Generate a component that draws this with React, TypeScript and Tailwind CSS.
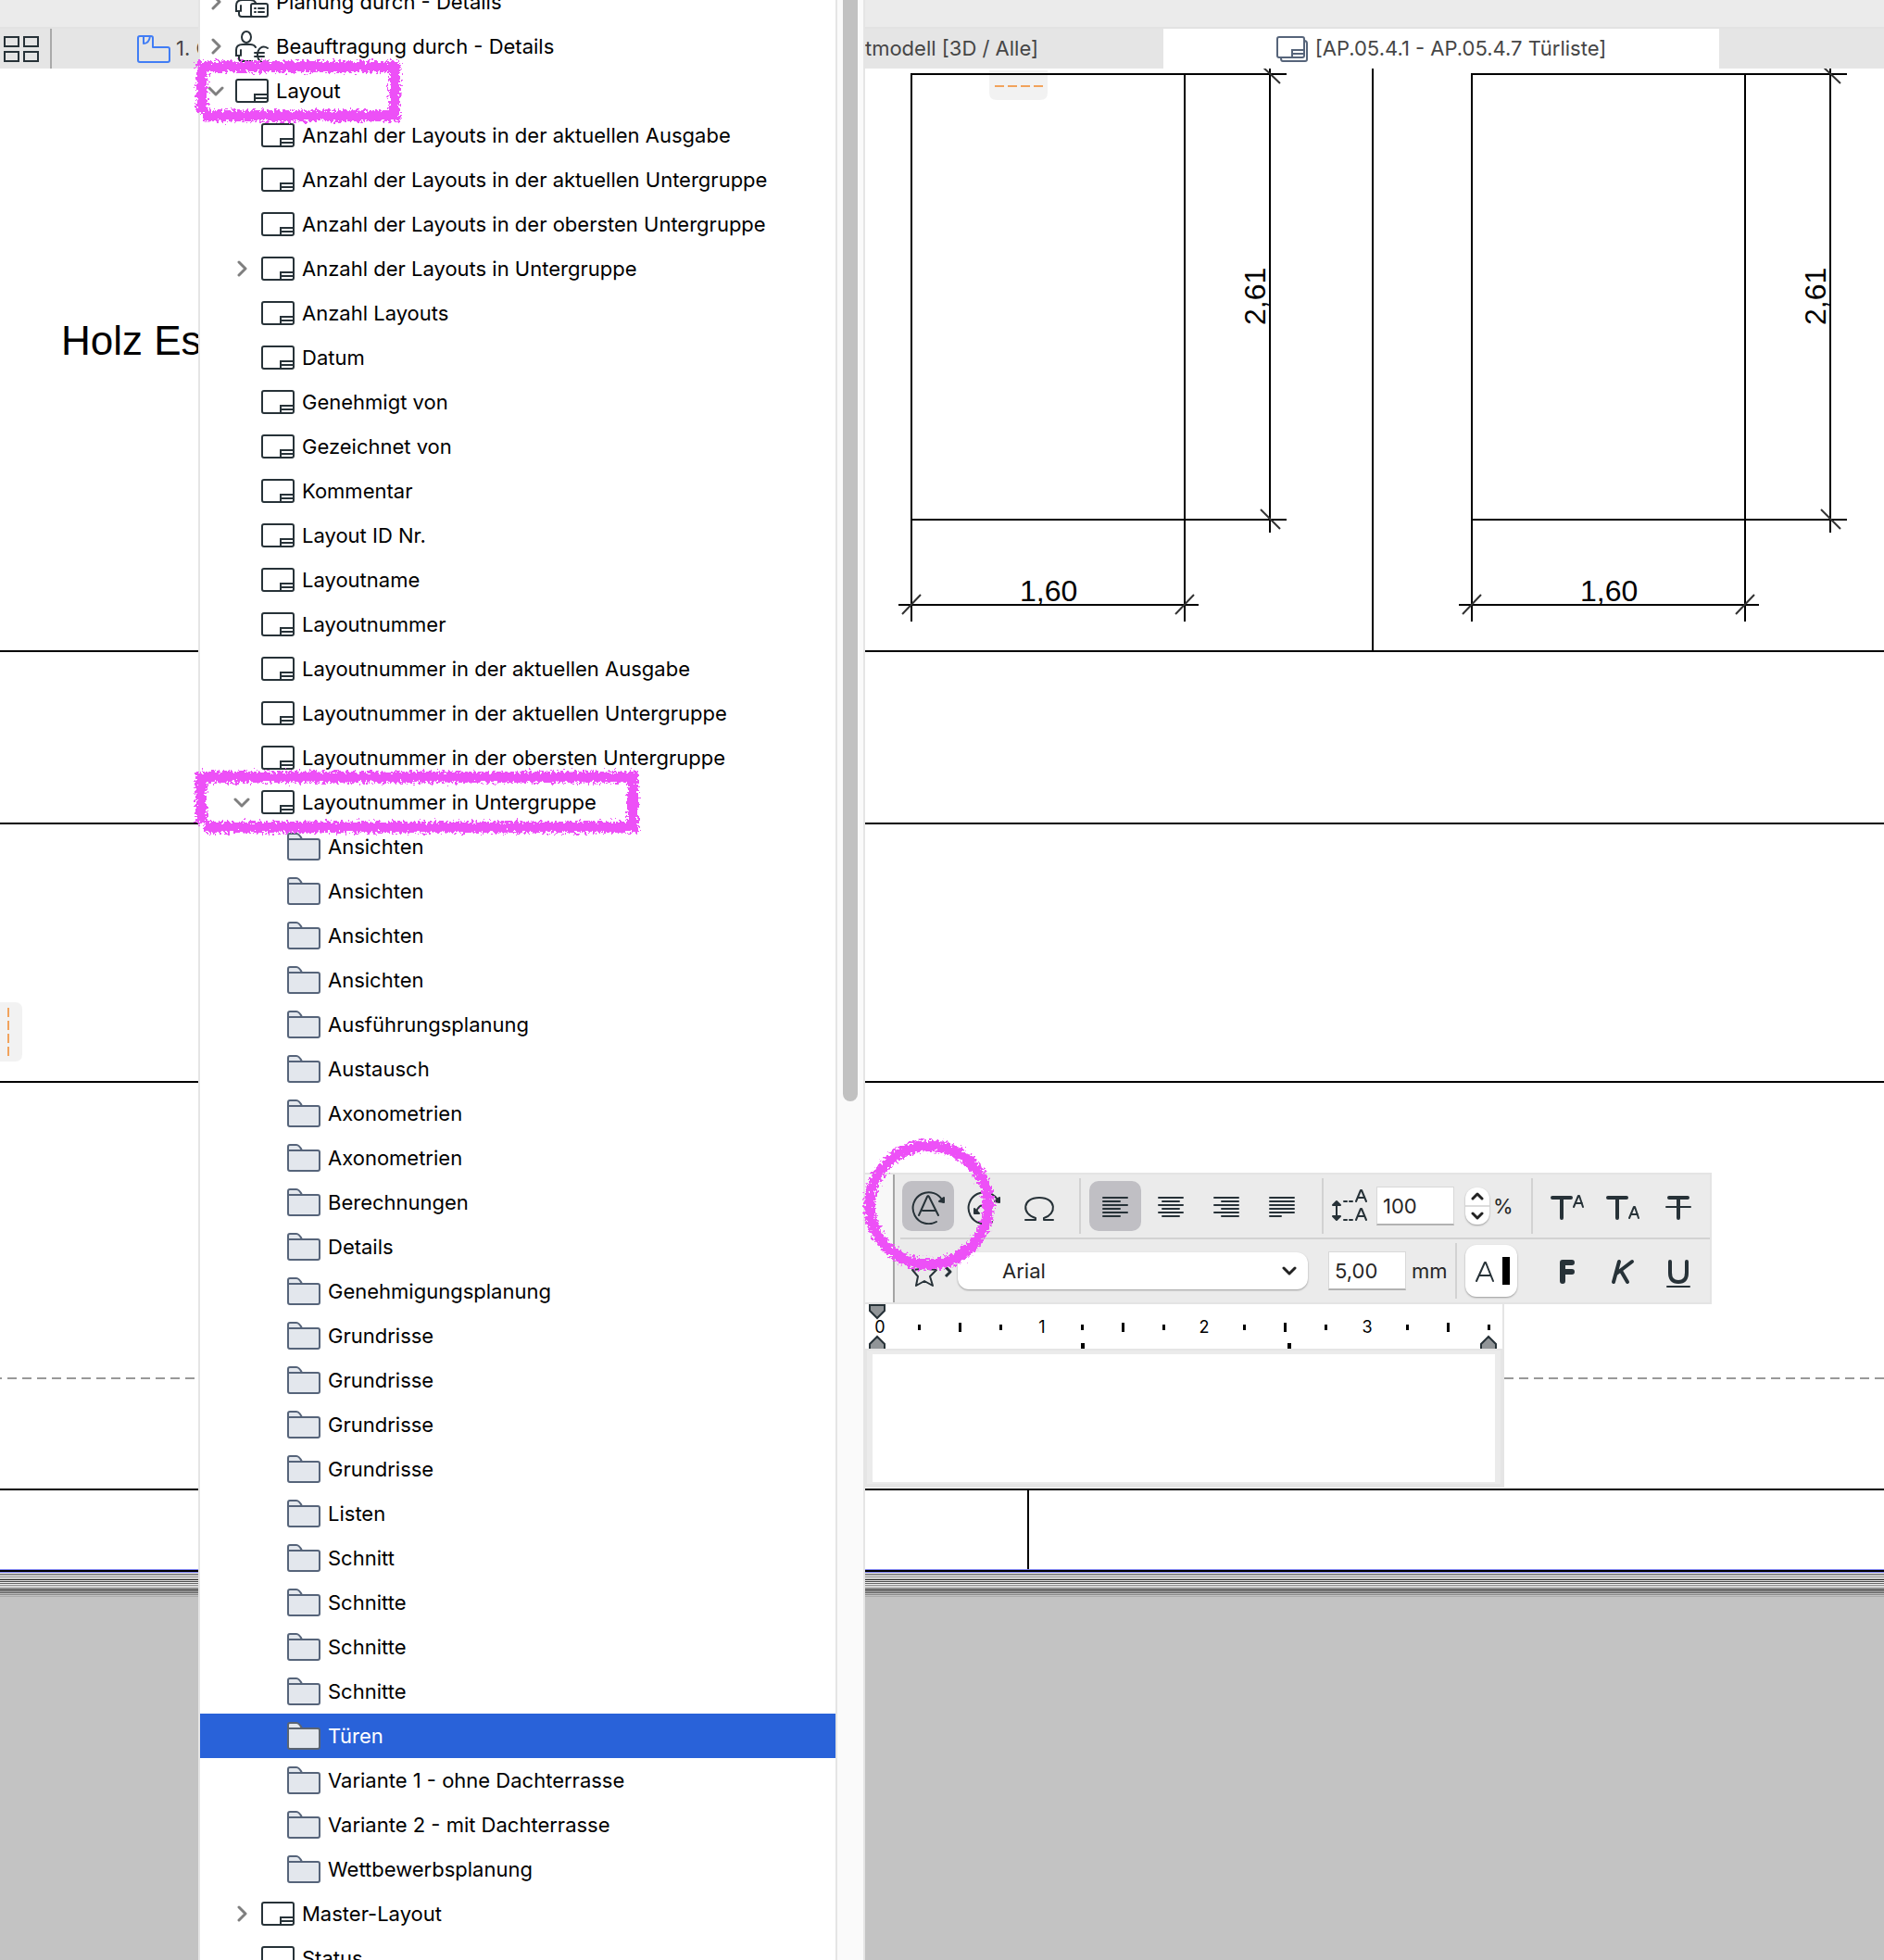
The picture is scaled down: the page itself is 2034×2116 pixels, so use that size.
import { type ReactNode } from "react";
import clsx from "clsx";

type IconKind = "planner" | "contractor" | "layout" | "folder";

interface TreeItem {
  label: string;
  level: 0 | 1 | 2;
  icon: IconKind;
  state?: "open" | "closed";
  selected?: boolean;
}

const layoutFields = [
  "Anzahl der Layouts in der aktuellen Ausgabe",
  "Anzahl der Layouts in der aktuellen Untergruppe",
  "Anzahl der Layouts in der obersten Untergruppe",
  "Anzahl der Layouts in Untergruppe",
  "Anzahl Layouts",
  "Datum",
  "Genehmigt von",
  "Gezeichnet von",
  "Kommentar",
  "Layout ID Nr.",
  "Layoutname",
  "Layoutnummer",
  "Layoutnummer in der aktuellen Ausgabe",
  "Layoutnummer in der aktuellen Untergruppe",
  "Layoutnummer in der obersten Untergruppe",
];

const subsets = [
  "Ansichten",
  "Ansichten",
  "Ansichten",
  "Ansichten",
  "Ausführungsplanung",
  "Austausch",
  "Axonometrien",
  "Axonometrien",
  "Berechnungen",
  "Details",
  "Genehmigungsplanung",
  "Grundrisse",
  "Grundrisse",
  "Grundrisse",
  "Grundrisse",
  "Listen",
  "Schnitt",
  "Schnitte",
  "Schnitte",
  "Schnitte",
  "Türen",
  "Variante 1 - ohne Dachterrasse",
  "Variante 2 - mit Dachterrasse",
  "Wettbewerbsplanung",
];

const items: TreeItem[] = [
  { label: "Planung durch - Details", level: 0, icon: "planner", state: "closed" },
  { label: "Beauftragung durch - Details", level: 0, icon: "contractor", state: "closed" },
  { label: "Layout", level: 0, icon: "layout", state: "open" },
  ...layoutFields.map((label): TreeItem => ({
    label,
    level: 1,
    icon: "layout",
    state: label === "Anzahl der Layouts in Untergruppe" ? "closed" : undefined,
  })),
  { label: "Layoutnummer in Untergruppe", level: 1, icon: "layout", state: "open" },
  ...subsets.map((label): TreeItem => ({
    label,
    level: 2,
    icon: "folder",
    selected: label === "Türen",
  })),
  { label: "Master-Layout", level: 1, icon: "layout", state: "closed" },
  { label: "Status", level: 1, icon: "layout" },
];

function Chevron({ open }: { open: boolean }) {
  return (
    <svg width="18" height="18" fill="none" stroke="#7f7f7f" strokeWidth="3" strokeLinecap="round" strokeLinejoin="round">
      {open ? <path d="M2 6l7 7 7-7" /> : <path d="M6 2l7 7-7 7" />}
    </svg>
  );
}

function Person() {
  return (
    <>
      <ellipse cx="12" cy="8" rx="5" ry="6" />
      <path d="M9 34H7c-2 0-3-1-3-3v-3H1v-6c0-4 3-6 7-6h8c3 0 5 1 6 3" />
      <path d="M6 22v6M9 34h9" />
    </>
  );
}

function ItemIcon({ kind, selected }: { kind: IconKind; selected?: boolean }) {
  if (kind === "folder") {
    const stroke = selected ? "#5a6472" : "#56647a";
    return (
      <svg width="36" height="30" fill="#e3e7ed" stroke={stroke} strokeWidth="2" strokeLinejoin="round">
        <path d="M1 8V3q0-2 2-2h7q3 0 6 6H1z" />
        <path d="M1 7h32q2 0 2 2v18q0 2-2 2H3q-2 0-2-2z" />
      </svg>
    );
  }
  if (kind === "layout") {
    return (
      <svg width="36" height="28" fill="none" stroke="#273238" strokeWidth="2">
        <rect x="1" y="2" width="34" height="24" rx="2" />
        <path d="M21 26v-8h14M21 22h14" />
      </svg>
    );
  }
  return (
    <svg width="36" height="36" fill="none" stroke="#273238" strokeWidth="2" strokeLinecap="round">
      <Person />
      {kind === "planner" ? (
        <>
          <rect x="17" y="20" width="18" height="14" rx="2" fill="#fff" />
          <path d="M21 25h1M25 25h6M21 29h1M25 29h6" />
        </>
      ) : (
        <>
          <circle cx="31" cy="27" r="8" fill="#fff" stroke="none" />
          <path d="M35 20c-6-4-11 1-11 7s5 11 11 7M21 25h10M21 29h10" />
        </>
      )}
    </svg>
  );
}

const indent = ["pl-0.5", "pl-[30px]", "pl-[58px]"];

function TreeRow({ item }: { item: TreeItem }) {
  return (
    <li>
      <button
        className={clsx(
          "flex h-12 w-full items-center whitespace-nowrap text-left",
          indent[item.level],
          item.selected ? "bg-[#2962d9] text-white" : "text-black"
        )}
      >
        <span className="flex w-[30px] shrink-0 justify-center">
          {item.state && <Chevron open={item.state === "open"} />}
        </span>
        <span className="ml-1.5 shrink-0">
          <ItemIcon kind={item.icon} selected={item.selected} />
        </span>
        <span className="ml-2">{item.label}</span>
      </button>
    </li>
  );
}

function FieldMenu() {
  return (
    <div className="absolute top-0 left-[214px] flex h-full w-[720px] overflow-hidden border-l-2 border-[#e5e5e5] bg-white">
      <ul className="-mt-[22px] flex-1">
        {items.map((item, i) => (
          <TreeRow key={i} item={item} />
        ))}
      </ul>
      <div className="w-8 border-x-2 border-[#e5e5e5] bg-[#fafafa] px-1.5">
        <div className="h-[1189px] w-4 rounded-b-full bg-[#c1c1c1]" />
      </div>
    </div>
  );
}

function TabBar() {
  return (
    <header className="text-[#464646]">
      <div className="h-[31px] border-b-2 border-[#e2e2e2] bg-[#ebebeb]" />
      <nav className="flex h-[43px] bg-[#e5e5e5]">
        <button aria-label="Übersicht" className="flex w-14 items-center border-r-2 border-[#a9a9a9] pl-1">
          <svg width="38" height="28" fill="none" stroke="#273238" strokeWidth="2">
            <rect x="1" y="1" width="15" height="10" />
            <rect x="22" y="1" width="15" height="10" />
            <rect x="1" y="17" width="15" height="10" />
            <rect x="22" y="17" width="15" height="10" />
          </svg>
        </button>
        <button className="flex w-[600px] items-center gap-1.5 pl-[92px] whitespace-nowrap">
          <svg width="36" height="30" fill="none" stroke="#417df5" strokeWidth="2" strokeLinejoin="round">
            <path d="M3 1h12q2 0 2 2v10h16q2 0 2 2v12q0 2-2 2H3q-2 0-2-2V3q0-2 2-2z" />
            <path d="M7 1v8q6 0 7-8" />
          </svg>
          1. OG
        </button>
        <button className="flex w-[600px] items-center justify-end pr-[135px]">Gesamtmodell [3D / Alle]</button>
        <button className="flex w-[600px] items-center justify-center gap-2 bg-white">
          <svg width="34" height="28" fill="none" stroke="#56647a" strokeWidth="2">
            <path d="M5 24q0 3 2 3h24q2 0 2-2V8q0-3-3-3" />
            <rect x="1" y="1" width="29" height="22" rx="2" />
            <path d="M17 23v-8h13M17 19h13" />
          </svg>
          [AP.05.4.1 - AP.05.4.7 Türliste]
        </button>
      </nav>
    </header>
  );
}

function DoorElevation({ x }: { x: number }) {
  return (
    <g transform={`translate(${x} 0)`}>
      <g fill="none" stroke="#000" strokeWidth="2">
        <path d="M0 671V80H405M295 80V671M387 74V575M0 561H405M-14 653H310" />
      </g>
      <path d="M377 70l21 20M377 550l21 21M-10 663l20-21M285 663l20-21" stroke="#333" strokeWidth="2" />
      <text x="117" y="649" fontSize="32">1,60</text>
      <text transform="translate(382 351) rotate(-90)" fontSize="32">2,61</text>
    </g>
  );
}

const sheetEdge = [
  "#555", "#888", "#999", "#111", "#444", "#666", "#888", "#999", "#111", "#333", "#555", "#888", "#aaa",
];

function Drawing() {
  return (
    <svg
      className="block min-h-0 w-full flex-1"
      viewBox="0 74 2034 2042"
      preserveAspectRatio="xMinYMin slice"
      fontFamily="'Liberation Sans', Arial, sans-serif"
    >
      <rect x="0" y="74" width="2034" height="2042" fill="#fff" />
      <text x="66" y="383" fontSize="44">Holz Es</text>
      <DoorElevation x={984} />
      <DoorElevation x={1589} />
      <path
        d="M0 703H2034M0 889H2034M0 1168H2034M0 1608H2034M1482 74V703M1110 1608V1695"
        stroke="#000"
        strokeWidth="2"
      />
      <path d="M-8 1488H2034" stroke="#999" strokeWidth="2" strokeDasharray="10 6" />
      <rect y="1694" width="2034" height="4" fill="#7d82f0" />
      <rect y="1695" width="2034" height="2" fill="#000" />
      <rect y="1698" width="2034" height="17" fill="#f0f0f0" />
      <rect y="1715" width="2034" height="401" fill="#c3c3c3" />
      {sheetEdge.map((fill, i) => (
        <rect key={i} y={1699 + i * 2} width="2034" height="1" fill={fill} />
      ))}
      <path d="M1068 76h63v24q0 8-8 8h-47q-8 0-8-8z" fill="#000" fillOpacity="0.050" />
      <path d="M0 1082h16q8 0 8 8v48q0 8-8 8H0z" fill="#f2f2f2" />
      <path d="M1074 93h52M9 1088v52" stroke="#f2a35c" strokeWidth="2" strokeDasharray="10 4" />
    </svg>
  );
}

function ToolButton({ label, look = "plain", children }: { label: string; look?: "plain" | "active" | "raised"; children: ReactNode }) {
  return (
    <button
      aria-label={label}
      className={clsx(
        "flex w-14 shrink-0 items-center justify-center",
        look === "plain" && "h-[54px]",
        look === "active" && "h-[54px] rounded-[10px] bg-[#c0bfc4]",
        look === "raised" && "h-14 rounded-xl bg-white shadow-[0_1px_2px_rgba(0,0,0,0.35)]"
      )}
    >
      <svg width="40" height="40" fill="none" stroke="#273238" strokeWidth="2" strokeLinecap="round" strokeLinejoin="round">
        {children}
      </svg>
    </button>
  );
}

function Divider() {
  return <div className="h-[60px] w-0.5 shrink-0 bg-[#d2d2d2]" />;
}

function RotateArc() {
  return (
    <>
      <path d="M29 37A17 17 0 1 1 36 15" />
      <path d="M32 15l5 1V11z" fill="#273238" />
    </>
  );
}

function FormatRows() {
  const field =
    "h-[42px] w-[84px] shrink-0 border border-b-2 border-[#d8d8d8] border-b-[#b2b2b2] bg-white pl-1.5 text-[#262626] outline-none";
  return (
    <div className="flex w-[914px] border-2 border-l-0 border-[#e4e4e4] bg-[#ebebeb] text-[#262626]">
      <div className="w-8 shrink-0 border-r-2 border-[#a5a5a5] bg-[#f8f8f8]" />
      <div className="flex-1">
        <div className="ml-1.5 flex h-[70px] items-center border-b-2 border-[#d2d2d2] pl-0.5">
          <div className="flex gap-1">
            <ToolButton label="Text mitdrehen" look="active">
              <RotateArc />
              <path d="M10 30L19 10q1-2 2 0l10 20M14 25h13" />
            </ToolButton>
            <ToolButton label="Autotext einfügen">
              <RotateArc />
              <path d="M12 26q3-8 8-6 3 1 2 4M19 19q6-4 8 1 1 3-2 5" />
              <path d="M10 23v5h5z" fill="#273238" />
            </ToolButton>
            <ToolButton label="Symbol einfügen">
              <path d="M5 35h11v-2C1 29 1 11 20 11s19 18 5 22v2h10" />
            </ToolButton>
          </div>
          <div className="ml-[15px]"><Divider /></div>
          <div className="ml-[9px] flex gap-1">
            <ToolButton label="Linksbündig" look="active">
              <path d="M7 11h26M7 15h18M7 19h26M7 23h18M7 27h26M7 31h18" />
            </ToolButton>
            <ToolButton label="Zentriert">
              <path d="M7 11h26M11 15h18M7 19h26M11 23h18M7 27h26M11 31h18" />
            </ToolButton>
            <ToolButton label="Rechtsbündig">
              <path d="M7 11h26M15 15h18M7 19h26M15 23h18M7 27h26M15 31h18" />
            </ToolButton>
            <ToolButton label="Blocksatz">
              <path d="M7 11h26M7 15h26M7 19h26M7 23h26M7 27h26M7 31h12" />
            </ToolButton>
          </div>
          <div className="ml-[15px]"><Divider /></div>
          <label className="flex items-center">
            <svg className="ml-[9px] shrink-0" width="38" height="36" fill="none" stroke="#273238" strokeWidth="2" strokeLinecap="round" strokeLinejoin="round">
              <path d="M26 13l5-12h1l5 12M28 9h7M26 33l5-12h1l5 12M28 29h7" />
              <path d="M13 13h3M19 13h3M13 33h3M19 33h3M5 16v16" />
              <path d="M1 17l4-4 4 4zM1 29l4 4 4-4z" fill="#273238" />
            </svg>
            <input aria-label="Zeilenabstand" className={clsx(field, "ml-2.5")} defaultValue="100" />
          </label>
          <div className="ml-3 flex h-10 w-[26px] shrink-0 flex-col rounded-xl bg-white shadow-[0_1px_2px_rgba(0,0,0,0.35)]">
            <button aria-label="Erhöhen" className="flex flex-1 items-center justify-center border-b-2 border-[#dcdcdc]">
              <svg width="14" height="9" fill="none" stroke="#222" strokeWidth="3" strokeLinecap="round" strokeLinejoin="round">
                <path d="M2 7l5-5 5 5" />
              </svg>
            </button>
            <button aria-label="Verringern" className="flex flex-1 items-center justify-center">
              <svg width="14" height="9" fill="none" stroke="#222" strokeWidth="3" strokeLinecap="round" strokeLinejoin="round">
                <path d="M2 2l5 5 5-5" />
              </svg>
            </button>
          </div>
          <span className="w-[45px] pl-1">%</span>
          <Divider />
          <div className="ml-[9px] flex gap-1">
            <ToolButton label="Hochgestellt">
              <path d="M4 11h20M14 11v22" strokeWidth="4" />
              <path d="M27 21l5-12h1l4 12M29 17h7" />
            </ToolButton>
            <ToolButton label="Tiefgestellt">
              <path d="M4 11h20M14 11v22" strokeWidth="4" />
              <path d="M27 33l5-12h1l4 12M29 29h7" />
            </ToolButton>
            <ToolButton label="Durchgestrichen">
              <path d="M10 11h20M20 11v22" strokeWidth="4" />
              <path d="M7 21h26" />
            </ToolButton>
          </div>
        </div>
        <div className="flex h-[68px] items-center pl-2">
          <button aria-label="Favoriten" className="flex w-[60px] shrink-0 items-center">
            <svg width="60" height="36" fill="none" stroke="#273238" strokeWidth="2" strokeLinejoin="round">
              <path d="M24 7l4 9 9 1-7 7 3 10-9-5-9 5 2-10-6-7 9-1z" />
              <path d="M47 14l5 5-5 5" strokeWidth="3" />
            </svg>
          </button>
          <div className="grid w-[378px] shrink-0 items-center">
            <select
              aria-label="Schriftart"
              className="col-start-1 row-start-1 h-10 appearance-none rounded-xl bg-white pl-12 shadow-[0_1px_2px_rgba(0,0,0,0.35)] outline-none"
            >
              <option>Arial</option>
            </select>
            <svg className="col-start-1 row-start-1 mr-3 justify-self-end" width="16" height="12" fill="none" stroke="#222" strokeWidth="3" strokeLinecap="round" strokeLinejoin="round">
              <path d="M2 3l6 6 6-6" />
            </svg>
          </div>
          <label className="flex items-center">
            <input aria-label="Schriftgröße" className={clsx(field, "ml-[22px]")} defaultValue="5,00" />
            <span className="w-[53px] pl-1.5">mm</span>
          </label>
          <Divider />
          <div className="ml-[9px] flex items-center">
            <ToolButton look="raised" label="Textfarbe">
              <path d="M4 31L13 11h1l8 20M7 25h12" />
              <path d="M36 5v30" stroke="#000" strokeWidth="8" strokeLinecap="butt" />
            </ToolButton>
          </div>
          <div className="ml-[26px] flex gap-1">
            <ToolButton label="Fett">
              <path d="M15 31V11h10M15 21h10" strokeWidth="6" />
            </ToolButton>
            <ToolButton label="Kursiv">
              <path d="M16 10L10 32M30 10L13 23M18 20l7 12" strokeWidth="4" />
            </ToolButton>
            <ToolButton label="Unterstrichen">
              <path d="M11 10v12q0 10 9 10t9-10V10" strokeWidth="4" />
              <path d="M8 37h24" />
            </ToolButton>
          </div>
        </div>
      </div>
    </div>
  );
}

const minorTicks = [58, 146, 234, 322, 409, 497, 585, 673];
const majorTicks = [102, 278, 453, 629];
const numbers = [16, 191, 366, 542];

function Ruler() {
  return (
    <svg className="block w-full bg-white" height="48" fontSize="18" textAnchor="middle">
      {minorTicks.map((x) => (
        <rect key={x} x={x - 1} y="22" width="3" height="6" />
      ))}
      {majorTicks.map((x) => (
        <rect key={x} x={x - 1} y="20" width="3" height="10" />
      ))}
      {numbers.map((x, i) => (
        <text key={x} x={x} y="31">{i}</text>
      ))}
      <path d="M233 42h4v6h-4zM456 42h4v6h-4z" />
      <g fill="#919598" stroke="#273238" strokeWidth="2">
        <path d="M5 1h16v6l-8 8-8-8z" />
        <path d="M5 49v-6l8-8 8 8v6zM665 49v-6l8-8 8 8v6z" />
      </g>
    </svg>
  );
}

function TextEditor() {
  return (
    <div className="absolute top-[1266px] left-[934px]">
      <FormatRows />
      <div className="w-[690px] border-r-2 border-[#e5e5e5]">
        <Ruler />
        <div className="-mr-0.5 border-2 border-r-4 border-b-4 border-[#e5e5e5] bg-[#ebebeb] px-1.5 pt-1 pb-0.5">
          <textarea aria-label="Textinhalt" className="block h-[138px] w-full resize-none bg-white outline-none" />
        </div>
      </div>
    </div>
  );
}

// Crayon-like highlights around the relevant controls
function Highlights() {
  return (
    <svg className="pointer-events-none absolute inset-0 h-full w-full" fill="none" stroke="#ed50f7" strokeWidth="12">
      <filter id="crayon" x="0" y="0" width="2034" height="2116" filterUnits="userSpaceOnUse" colorInterpolationFilters="sRGB">
        <feTurbulence type="fractalNoise" baseFrequency="0.350" numOctaves="3" seed="4" />
        <feDisplacementMap in="SourceGraphic" scale="12" xChannelSelector="R" yChannelSelector="G" />
      </filter>
      <g filter="url(#crayon)">
        <path d="M212 72H426V125H219M218 68V122" />
        <path d="M212 839H683V893H221M217 836V889" />
        <circle cx="1003" cy="1301" r="64" />
      </g>
    </svg>
  );
}

export default function App() {
  return (
    <div className="relative flex h-screen w-full flex-col overflow-hidden bg-white font-[Inter,sans-serif] text-[22px]">
      <TabBar />
      <Drawing />
      <FieldMenu />
      <TextEditor />
      <Highlights />
    </div>
  );
}
